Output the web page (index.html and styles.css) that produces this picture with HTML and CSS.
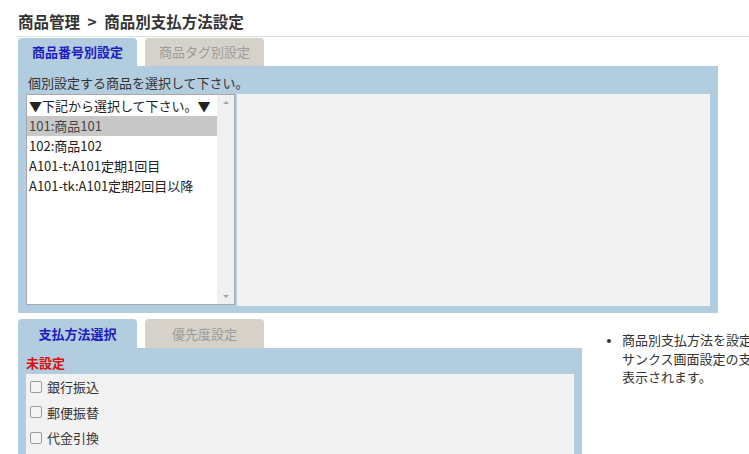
FILE: index.html
```html
<!DOCTYPE html>
<html lang="ja">
<head>
<meta charset="utf-8">
<title>商品別支払方法設定</title>
<link rel="stylesheet" href="styles.css">
</head>
<body>
<div class="page">
  <h1 class="title">商品管理 &gt; 商品別支払方法設定</h1>

  <div class="tabs">
    <div class="tab tab-active">商品番号別設定</div>
    <div class="tab tab-off">商品タグ別設定</div>
  </div>
  <div class="panel panel-top">
    <div class="panel-label">個別設定する商品を選択して下さい。</div>
    <div class="panel-body">
      <div class="listbox">
        <div class="options">
          <div class="opt">▼下記から選択して下さい。▼</div>
          <div class="opt opt-sel">101:商品101</div>
          <div class="opt">102:商品102</div>
          <div class="opt">A101-t:A101定期1回目</div>
          <div class="opt">A101-tk:A101定期2回目以降</div>
        </div>
        <div class="scrollbar">
          <span class="arrow arrow-up"></span>
          <span class="arrow arrow-down"></span>
        </div>
      </div>
      <div class="detail"></div>
    </div>
  </div>

  <div class="lower">
    <div class="lower-main">
      <div class="tabs tabs-lower">
        <div class="tab tab-active">支払方法選択</div>
        <div class="tab tab-off">優先度設定</div>
      </div>
      <div class="panel panel-pay">
        <div class="unset">未設定</div>
        <div class="checks">
          <div class="check-row"><span class="box"></span>銀行振込</div>
          <div class="check-row"><span class="box"></span>郵便振替</div>
          <div class="check-row"><span class="box"></span>代金引換</div>
        </div>
      </div>
    </div>
    <ul class="note">
      <li>商品別支払方法を設定した場合、<br>サンクス画面設定の支払方法欄に<br>表示されます。</li>
    </ul>
  </div>
</div>
</body>
</html>
```

FILE: styles.css
```css
html, body {
  margin: 0;
  padding: 0;
  overflow: hidden;
  background: #ffffff;
}
body {
  font-family: "Noto Sans CJK JP", "Noto Sans", sans-serif;
  color: #333333;
  font-size: 13px;
}
.page {
  width: 749px;
  height: 454px;
  overflow: hidden;
}
.title {
  margin: 0 0 0 18px;
  padding-top: 10px;
  height: 26px;
  line-height: 23px;
  font-size: 15.5px;
  word-spacing: 4px;
  font-weight: bold;
  color: #333333;
  border-bottom: 1px solid #dddddd;
  white-space: nowrap;
}
.tabs {
  display: flex;
  gap: 8px;
  margin: 1px 0 0 18px;
}
.tab {
  width: 119px;
  height: 28px;
  line-height: 28px;
  text-align: center;
  font-size: 13px;
  border-radius: 4px 4px 0 0;
}
.tab-active {
  background: #b3cde0;
  color: #1c1cc0;
  font-weight: bold;
}
.tab-off {
  background: #d6d2ca;
  color: #9b9b9b;
}
.panel {
  background: #b3cde0;
  margin-left: 18px;
}
.panel-top {
  width: 700px;
  height: 247px;
  box-sizing: border-box;
  padding: 6px 8px 7px 8px;
  display: flex;
  flex-direction: column;
}
.panel-label {
  line-height: 22px;
  height: 22px;
  padding-left: 2px;
  white-space: nowrap;
}
.panel-body {
  display: flex;
  flex: 1;
  gap: 2px;
}
.listbox {
  width: 209px;
  height: 211px;
  box-sizing: border-box;
  border: 1px solid #a8a8a8;
  background: #ffffff;
  display: flex;
}
.options {
  flex: 1;
  padding-top: 1px;
}
.opt {
  height: 20px;
  line-height: 20px;
  padding-left: 2px;
  color: #222222;
  white-space: nowrap;
}
.opt-sel {
  background: #c8c8c8;
  color: #444444;
}
.scrollbar {
  width: 17px;
  background: #f0f0f0;
  display: flex;
  flex-direction: column;
  justify-content: space-between;
  align-items: center;
  padding: 6px 0 6px;
}
.arrow {
  width: 0;
  height: 0;
  border-left: 3px solid transparent;
  border-right: 3px solid transparent;
}
.arrow-up {
  border-bottom: 3px solid #a3a3a3;
}
.arrow-down {
  border-top: 3px solid #a3a3a3;
}
.detail {
  flex: 1;
  height: 212px;
  background: #f2f2f2;
}
.lower {
  display: flex;
  margin-top: 6px;
}
.lower-main {
  width: 582px;
}
.tabs-lower {
  margin-top: 0;
}
.tabs-lower .tab {
  height: 29px;
  line-height: 29px;
}
.panel-pay {
  width: 564px;
  height: 120px;
  box-sizing: border-box;
  padding: 4px 8px 0 8px;
}
.unset {
  color: #e01010;
  font-weight: bold;
  line-height: 22px;
  height: 22px;
}
.checks {
  background: #f2f2f2;
  height: 100px;
}
.check-row {
  display: flex;
  align-items: center;
  height: 25.5px;
  padding-left: 4px;
  color: #333333;
}
.box {
  width: 10px;
  height: 10px;
  border: 1px solid #9a9a9a;
  border-radius: 2px;
  background: #f4f4f4;
  margin-right: 5px;
}
.note {
  margin: 12px 0 0 0;
  padding-left: 40px;
  line-height: 18.5px;
  font-size: 13px;
  color: #333333;
  white-space: nowrap;
}
.note li::marker {
  font-size: 11px;
}
```
